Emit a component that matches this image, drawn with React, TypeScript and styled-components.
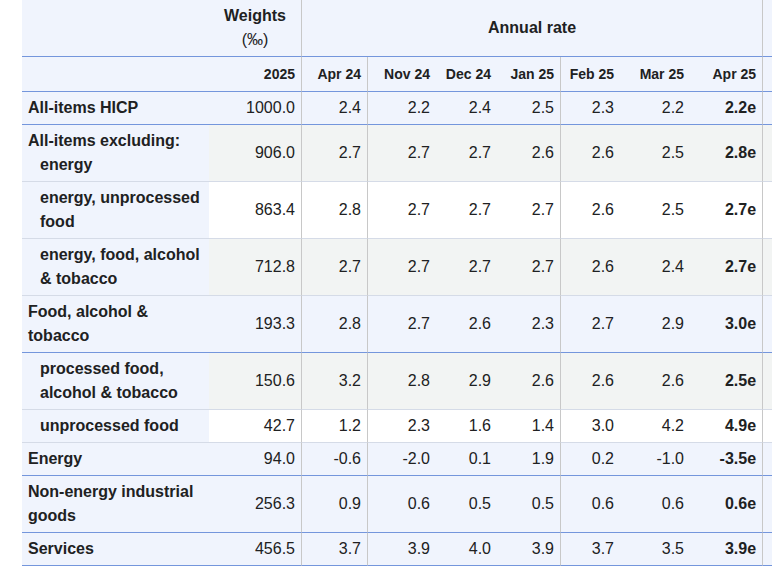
import React from "react";
import styled, { createGlobalStyle, css } from "styled-components";

type Tone = "blue" | "gray" | "white";
type Line = "strong" | "soft";

const C = {
  blue: "#f0f4fd",
  gray: "#f2f4f3",
  white: "#ffffff",
  strong: "#7496dc",
  soft: "#d5dbe7",
  vline: "#c8c8c8",
  text: "#202122",
};

const GlobalStyle = createGlobalStyle`
  html, body { margin: 0; padding: 0; background: #fff; overflow: hidden; }
  body { font-family: "Liberation Sans", Arial, sans-serif; color: ${C.text}; }
`;

const Wrap = styled.div`
  width: 772px;
  height: 571px;
  box-sizing: border-box;
  padding-left: 22px;
  overflow: hidden;
`;

const Table = styled.table`
  border-collapse: separate;
  border-spacing: 0;
  table-layout: fixed;
  width: 781px;
  font-size: 16px;
  line-height: 24px;
`;

const Col = styled.col<{ $w: number }>`
  width: ${(p) => p.$w}px;
`;

const vr = css<{ $vr?: boolean }>`
  ${(p) => (p.$vr ? `border-right: 1px solid ${C.vline};` : "")}
`;

const HeadCell = styled.th<{ $vr?: boolean; $align?: "left" | "center" | "right"; $small?: boolean }>`
  background: ${C.blue};
  font-weight: bold;
  text-align: ${(p) => p.$align ?? "right"};
  vertical-align: middle;
  border-bottom: 1px solid ${C.strong};
  padding: ${(p) => (p.$small ? "5px 6px 5px" : "4px 6px")};
  font-size: ${(p) => (p.$small ? "14px" : "16px")};
  white-space: nowrap;
  ${vr}
`;

const Unit = styled.span`
  display: block;
  font-weight: normal;
  font-size: 16px;
`;

const LabelCell = styled.td<{ $line: Line; $indent?: boolean }>`
  background: ${C.blue};
  font-weight: bold;
  text-align: left;
  vertical-align: middle;
  padding: 4px 6px 4px ${(p) => (p.$indent ? "18px" : "6px")};
  border-bottom: 1px solid ${(p) => (p.$line === "strong" ? C.strong : C.soft)};
`;

const SubLabel = styled.span`
  display: block;
  padding-left: 12px;
`;

const NumCell = styled.td<{ $tone: Tone; $line: Line; $vr?: boolean; $bold?: boolean }>`
  background: ${(p) => C[p.$tone]};
  text-align: right;
  vertical-align: middle;
  white-space: nowrap;
  font-weight: ${(p) => (p.$bold ? "bold" : "normal")};
  padding: 4px 6px;
  border-bottom: 1px solid ${(p) => (p.$line === "strong" ? C.strong : C.soft)};
  ${vr}
`;

const widths = [187, 93, 66, 68, 61, 64, 59, 70, 73, 40];
const months = ["Apr 24", "Nov 24", "Dec 24", "Jan 25", "Feb 25", "Mar 25", "Apr 25"];
const ruled = new Set([0, 3, 6]); // month index with a right rule

type RowData = {
  label: string;
  sub?: string;
  indent?: boolean;
  w: string;
  v: string[];
  tone: Tone;
  line: Line;
};

const rows: RowData[] = [
  { label: "All-items HICP", w: "1000.0", v: ["2.4", "2.2", "2.4", "2.5", "2.3", "2.2", "2.2e"], tone: "blue", line: "strong" },
  { label: "All-items excluding:", sub: "energy", w: "906.0", v: ["2.7", "2.7", "2.7", "2.6", "2.6", "2.5", "2.8e"], tone: "gray", line: "soft" },
  { label: "energy, unprocessed food", indent: true, w: "863.4", v: ["2.8", "2.7", "2.7", "2.7", "2.6", "2.5", "2.7e"], tone: "white", line: "soft" },
  { label: "energy, food, alcohol & tobacco", indent: true, w: "712.8", v: ["2.7", "2.7", "2.7", "2.7", "2.6", "2.4", "2.7e"], tone: "gray", line: "soft" },
  { label: "Food, alcohol & tobacco", w: "193.3", v: ["2.8", "2.7", "2.6", "2.3", "2.7", "2.9", "3.0e"], tone: "blue", line: "strong" },
  { label: "processed food, alcohol & tobacco", indent: true, w: "150.6", v: ["3.2", "2.8", "2.9", "2.6", "2.6", "2.6", "2.5e"], tone: "gray", line: "soft" },
  { label: "unprocessed food", indent: true, w: "42.7", v: ["1.2", "2.3", "1.6", "1.4", "3.0", "4.2", "4.9e"], tone: "white", line: "soft" },
  { label: "Energy", w: "94.0", v: ["-0.6", "-2.0", "0.1", "1.9", "0.2", "-1.0", "-3.5e"], tone: "blue", line: "strong" },
  { label: "Non-energy industrial goods", w: "256.3", v: ["0.9", "0.6", "0.5", "0.5", "0.6", "0.6", "0.6e"], tone: "blue", line: "strong" },
  { label: "Services", w: "456.5", v: ["3.7", "3.9", "4.0", "3.9", "3.7", "3.5", "3.9e"], tone: "blue", line: "strong" },
];

export default function App() {
  return (
    <Wrap>
      <GlobalStyle />
      <Table>
        <colgroup>
          {widths.map((w, i) => (
            <Col key={i} $w={w} />
          ))}
        </colgroup>
        <thead>
          <tr>
            <HeadCell />
            <HeadCell $align="center" $vr>
              Weights
              <Unit>(‰)</Unit>
            </HeadCell>
            <HeadCell colSpan={7} $align="center" $vr>
              Annual rate
            </HeadCell>
            <HeadCell />
          </tr>
          <tr>
            <HeadCell $small />
            <HeadCell $small $vr>
              2025
            </HeadCell>
            {months.map((m, i) => (
              <HeadCell key={m} $small $vr={ruled.has(i) || i === 6}>
                {m}
              </HeadCell>
            ))}
            <HeadCell $small />
          </tr>
        </thead>
        <tbody>
          {rows.map((r) => (
            <tr key={r.label}>
              <LabelCell $line={r.line} $indent={r.indent}>
                {r.label}
                {r.sub && <SubLabel>{r.sub}</SubLabel>}
              </LabelCell>
              <NumCell $tone={r.tone} $line={r.line} $vr>
                {r.w}
              </NumCell>
              {r.v.map((val, i) => (
                <NumCell key={i} $tone={r.tone} $line={r.line} $vr={ruled.has(i) || i === 6} $bold={i === 6}>
                  {val}
                </NumCell>
              ))}
              <NumCell $tone={r.tone} $line={r.line} />
            </tr>
          ))}
        </tbody>
      </Table>
    </Wrap>
  );
}
